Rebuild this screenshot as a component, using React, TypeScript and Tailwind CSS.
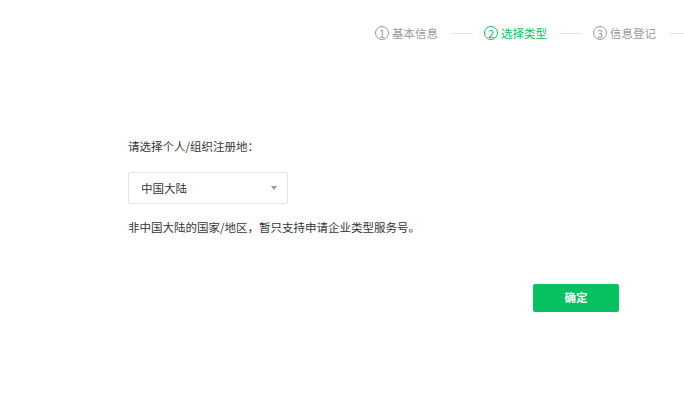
const font = { fontFamily: '"Noto Sans CJK SC", "Noto Sans", sans-serif' };

function Step({ n, label, active }: { n: number; label: string; active?: boolean }) {
  const color = active ? "text-[#07c160] border-[#07c160]" : "text-[#9a9a9a] border-[#9a9a9a]";
  return (
    <div className={`flex shrink-0 items-center gap-[3px] ${active ? "text-[#07c160]" : "text-[#9a9a9a]"}`}>
      <span
        className={`flex h-[14px] w-[14px] items-center justify-center rounded-full border text-[11px] leading-none ${color}`}
      >
        {n}
      </span>
      <span className="w-[48px] text-[11.5px] leading-4">{label}</span>
    </div>
  );
}

function Line() {
  return <div className="mx-[11px] h-px w-[22px] shrink-0 bg-[#e5e5e5]" />;
}

export default function App() {
  return (
    <div className="h-[399px] w-[684px] overflow-hidden bg-white text-[#353535]" style={font}>
      {/* Steps */}
      <div className="flex items-center overflow-hidden whitespace-nowrap pl-[375px] pt-[25px]">
        <Step n={1} label="基本信息" />
        <Line />
        <Step n={2} label="选择类型" active />
        <Line />
        <Step n={3} label="信息登记" />
        <Line />
      </div>

      <main className="ml-[128px] w-[491px] pt-[97px]">
        <p className="text-[11.5px] leading-4">请选择个人/组织注册地：</p>

        <div className="mt-[18px] flex h-[32px] w-[160px] items-center justify-between rounded-[2px] border border-[#e4e4e4] pl-[12px] pr-[10px]">
          <span className="text-[11.5px] leading-4">中国大陆</span>
          <span className="h-0 w-0 border-x-[3px] border-t-[4px] border-x-transparent border-t-[#9a9a9a]" />
        </div>

        <p className="mt-[15px] text-[11.5px] leading-4">非中国大陆的国家/地区，暂只支持申请企业类型服务号。</p>

        <div className="mt-[49px] flex justify-end">
          <button className="h-[28px] w-[86px] rounded-[2px] bg-[#07c160] text-[11.5px] font-bold text-white">
            确定
          </button>
        </div>
      </main>
    </div>
  );
}
